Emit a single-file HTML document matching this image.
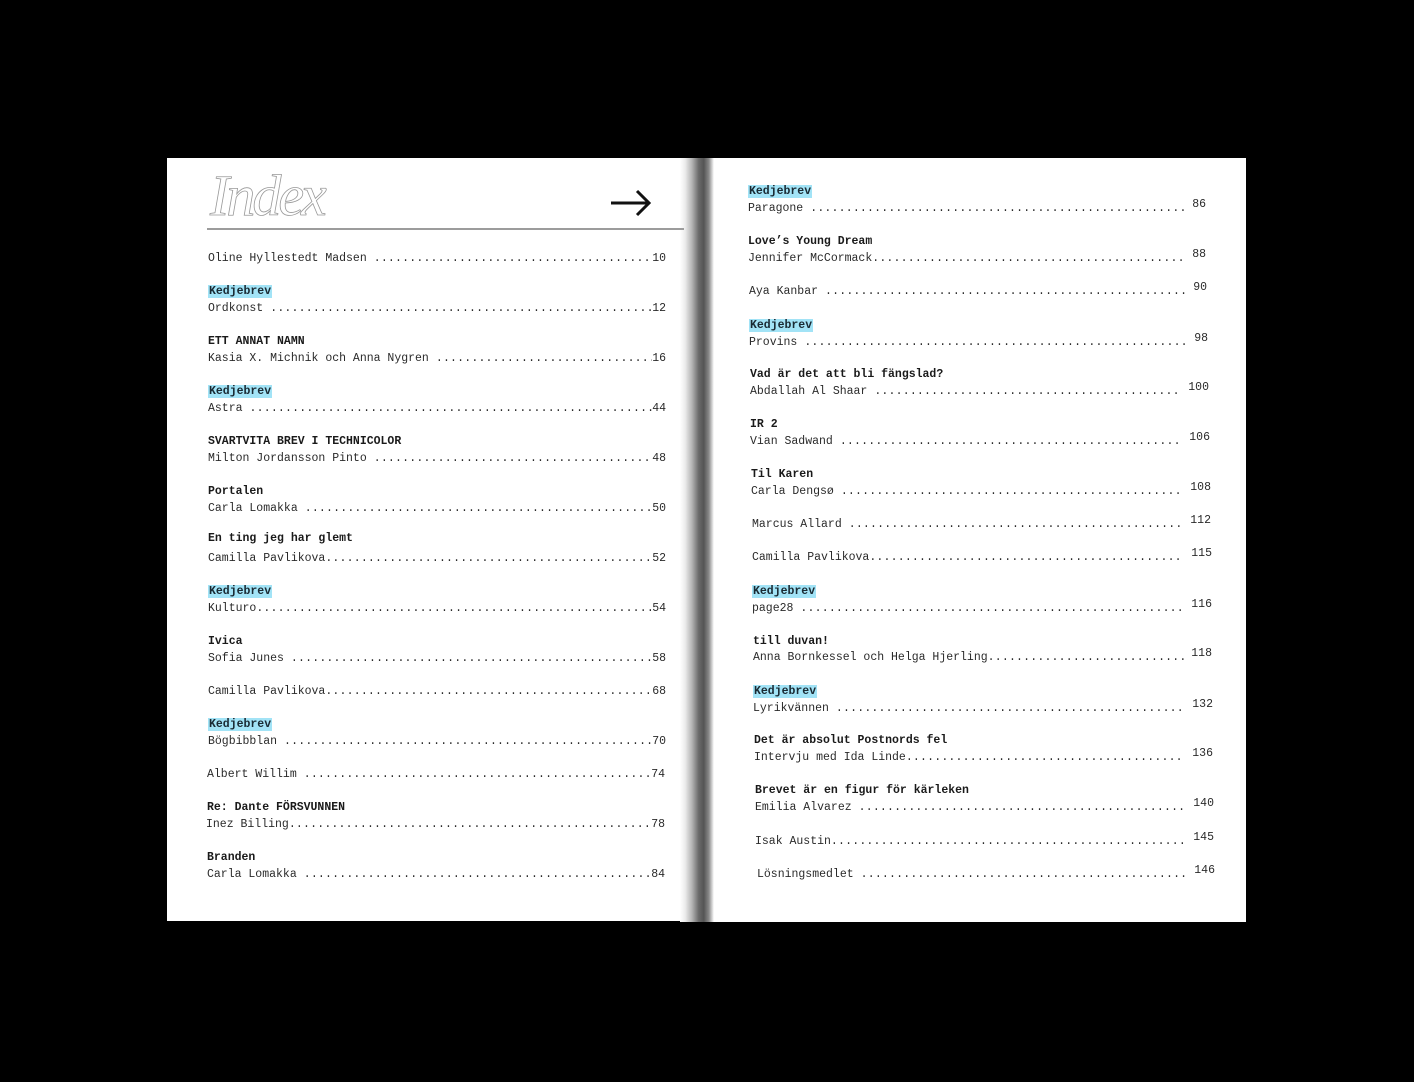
<!DOCTYPE html>
<html><head><meta charset="utf-8">
<style>
html,body{margin:0;padding:0;background:#000;}
body{width:1414px;height:1080px;position:relative;overflow:hidden;font-family:"Liberation Mono",monospace;}
.pg{position:absolute;background:#fff;}
.l{position:absolute;display:flex;white-space:nowrap;font-size:11.5px;line-height:14px;height:14px;color:#2a2a2a;}
.l .d{flex:1;overflow:hidden;margin-left:7px;letter-spacing:0.2px}
.r .n{margin-left:7px;position:relative;top:-4px}
.t{position:absolute;font-size:11.5px;line-height:14px;white-space:nowrap;color:#1a1a1a;font-weight:bold;}
.k{background:#a2e3f6;color:#1a2a33;font-weight:bold;padding:0 1px;}
#w{position:absolute;left:0;top:2px;width:1414px;height:1080px}
</style></head><body>
<div class="pg" style="left:167px;top:158px;width:545px;height:763px"></div>
<div class="pg" style="left:700px;top:158px;width:546px;height:764px"></div>
<div style="position:absolute;left:680px;top:158px;width:34px;height:764px;background:linear-gradient(90deg,#fff 0%,#ececec 15%,#b5b5b5 35%,#6a6a6a 55%,#555 70%,#8a8a8a 85%,#fff 100%)"></div>

<div style="position:absolute;left:210px;top:162px;font-family:'Liberation Serif',serif;font-style:italic;font-size:58px;color:transparent;-webkit-text-stroke:0.8px #999;letter-spacing:-3px">Index</div>
<div style="position:absolute;left:207px;top:228px;width:477px;height:2px;background:#9c9c9c"></div>
<svg style="position:absolute;left:608px;top:188px" width="46" height="30" viewBox="0 0 46 30"><path d="M3 15H41M29 3L41 15L29 27" fill="none" stroke="#111" stroke-width="3"/></svg>

<div id="w">
<div class="l" style="left:208px;top:250px;width:458px"><span>Oline Hyllestedt Madsen</span><span class="d">........................................................................</span><span class="n">10</span></div>
<div class="t" style="left:208px;top:283px"><span class="k">Kedjebrev</span></div>
<div class="l" style="left:208px;top:300px;width:458px"><span>Ordkonst</span><span class="d">........................................................................</span><span class="n">12</span></div>
<div class="t" style="left:208px;top:333px">ETT ANNAT NAMN</div>
<div class="l" style="left:208px;top:350px;width:458px"><span>Kasia X. Michnik och Anna Nygren</span><span class="d">........................................................................</span><span class="n">16</span></div>
<div class="t" style="left:208px;top:383px"><span class="k">Kedjebrev</span></div>
<div class="l" style="left:208px;top:400px;width:458px"><span>Astra</span><span class="d">........................................................................</span><span class="n">44</span></div>
<div class="t" style="left:208px;top:433px">SVARTVITA BREV I TECHNICOLOR</div>
<div class="l" style="left:208px;top:450px;width:458px"><span>Milton Jordansson Pinto</span><span class="d">........................................................................</span><span class="n">48</span></div>
<div class="t" style="left:208px;top:483px">Portalen</div>
<div class="l" style="left:208px;top:500px;width:458px"><span>Carla Lomakka</span><span class="d">........................................................................</span><span class="n">50</span></div>
<div class="t" style="left:208px;top:530px">En ting jeg har glemt</div>
<div class="l" style="left:208px;top:550px;width:458px"><span>Camilla Pavlikova</span><span class="d" style="margin-left:0">........................................................................</span><span class="n">52</span></div>
<div class="t" style="left:208px;top:583px"><span class="k">Kedjebrev</span></div>
<div class="l" style="left:208px;top:600px;width:458px"><span>Kulturo</span><span class="d" style="margin-left:0">........................................................................</span><span class="n">54</span></div>
<div class="t" style="left:208px;top:633px">Ivica</div>
<div class="l" style="left:208px;top:650px;width:458px"><span>Sofia Junes</span><span class="d">........................................................................</span><span class="n">58</span></div>
<div class="l" style="left:208px;top:683px;width:458px"><span>Camilla Pavlikova</span><span class="d" style="margin-left:0">........................................................................</span><span class="n">68</span></div>
<div class="t" style="left:208px;top:716px"><span class="k">Kedjebrev</span></div>
<div class="l" style="left:208px;top:733px;width:458px"><span>Bögbibblan</span><span class="d">........................................................................</span><span class="n">70</span></div>
<div class="l" style="left:207px;top:766px;width:458px"><span>Albert Willim</span><span class="d">........................................................................</span><span class="n">74</span></div>
<div class="t" style="left:207px;top:799px">Re: Dante FÖRSVUNNEN</div>
<div class="l" style="left:206px;top:816px;width:459px"><span>Inez Billing</span><span class="d" style="margin-left:0">........................................................................</span><span class="n">78</span></div>
<div class="t" style="left:207px;top:849px">Branden</div>
<div class="l" style="left:207px;top:866px;width:458px"><span>Carla Lomakka</span><span class="d">........................................................................</span><span class="n">84</span></div>

<div class="t" style="left:748px;top:183px"><span class="k">Kedjebrev</span></div>
<div class="l r" style="left:748px;top:200px;width:458px"><span>Paragone</span><span class="d">........................................................................</span><span class="n">86</span></div>
<div class="t" style="left:748px;top:233px">Love’s Young Dream</div>
<div class="l r" style="left:748px;top:250px;width:458px"><span>Jennifer McCormack</span><span class="d" style="margin-left:0">........................................................................</span><span class="n">88</span></div>
<div class="l r" style="left:749px;top:283px;width:458px"><span>Aya Kanbar</span><span class="d">........................................................................</span><span class="n">90</span></div>
<div class="t" style="left:749px;top:317px"><span class="k">Kedjebrev</span></div>
<div class="l r" style="left:749px;top:334px;width:459px"><span>Provins</span><span class="d">........................................................................</span><span class="n">98</span></div>
<div class="t" style="left:750px;top:366px">Vad är det att bli fängslad?</div>
<div class="l r" style="left:750px;top:383px;width:459px"><span>Abdallah Al Shaar</span><span class="d">........................................................................</span><span class="n">100</span></div>
<div class="t" style="left:750px;top:416px">IR 2</div>
<div class="l r" style="left:750px;top:433px;width:460px"><span>Vian Sadwand</span><span class="d">........................................................................</span><span class="n">106</span></div>
<div class="t" style="left:751px;top:466px">Til Karen</div>
<div class="l r" style="left:751px;top:483px;width:460px"><span>Carla Dengsø</span><span class="d">........................................................................</span><span class="n">108</span></div>
<div class="l r" style="left:752px;top:516px;width:459px"><span>Marcus Allard</span><span class="d">........................................................................</span><span class="n">112</span></div>
<div class="l r" style="left:752px;top:549px;width:460px"><span>Camilla Pavlikova</span><span class="d" style="margin-left:0">........................................................................</span><span class="n">115</span></div>
<div class="t" style="left:752px;top:583px"><span class="k">Kedjebrev</span></div>
<div class="l r" style="left:752px;top:600px;width:460px"><span>page28</span><span class="d">........................................................................</span><span class="n">116</span></div>
<div class="t" style="left:753px;top:633px">till duvan!</div>
<div class="l r" style="left:753px;top:649px;width:459px"><span>Anna Bornkessel och Helga Hjerling</span><span class="d" style="margin-left:0">........................................................................</span><span class="n">118</span></div>
<div class="t" style="left:753px;top:683px"><span class="k">Kedjebrev</span></div>
<div class="l r" style="left:753px;top:700px;width:460px"><span>Lyrikvännen</span><span class="d">........................................................................</span><span class="n">132</span></div>
<div class="t" style="left:754px;top:732px">Det är absolut Postnords fel</div>
<div class="l r" style="left:754px;top:749px;width:459px"><span>Intervju med Ida Linde</span><span class="d" style="margin-left:0">........................................................................</span><span class="n">136</span></div>
<div class="t" style="left:755px;top:782px">Brevet är en figur för kärleken</div>
<div class="l r" style="left:755px;top:799px;width:459px"><span>Emilia Alvarez</span><span class="d">........................................................................</span><span class="n">140</span></div>
<div class="l r" style="left:755px;top:833px;width:459px"><span>Isak Austin</span><span class="d" style="margin-left:0">........................................................................</span><span class="n">145</span></div>
<div class="l r" style="left:757px;top:866px;width:458px"><span>Lösningsmedlet</span><span class="d">........................................................................</span><span class="n">146</span></div>
</div>
</body></html>
